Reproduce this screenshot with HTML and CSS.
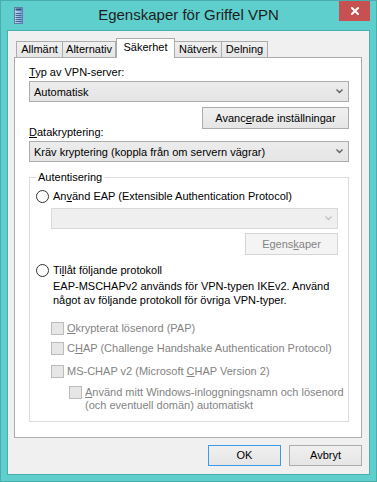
FILE: index.html
```html
<!DOCTYPE html>
<html lang="sv">
<head>
    <meta charset="UTF-8">
    <title>Egenskaper för Griffel VPN</title>
    <link rel="stylesheet" href="styles.css">
</head>
<body>
    <div class="window">
        <div class="titlebar">
            <svg class="app-icon" width="9" height="17" viewBox="0 0 9 17">
                <defs>
                    <linearGradient id="tower" x1="0" y1="0" x2="1" y2="0">
                        <stop offset="0" stop-color="#c9def2"/>
                        <stop offset="1" stop-color="#6f9bcb"/>
                    </linearGradient>
                </defs>
                <rect x="0.5" y="0.5" width="8" height="16" fill="url(#tower)" stroke="#5d7fa6"/>
                <rect x="1.5" y="1.5" width="6" height="2" fill="#2c4f80"/>
                <rect x="1.5" y="6" width="6" height="1" fill="#3f6495"/>
                <rect x="1.5" y="8" width="6" height="1" fill="#3f6495"/>
                <rect x="1.5" y="10" width="6" height="1" fill="#3f6495"/>
                <rect x="1.5" y="12" width="6" height="1" fill="#3f6495"/>
                <rect x="1.5" y="14" width="6" height="1" fill="#3f6495"/>
            </svg>
            <div class="title">Egenskaper för Griffel VPN</div>
            <div class="close">
                <svg width="8" height="8" viewBox="0 0 8 8">
                    <path d="M1 1 L7 7 M7 1 L1 7" stroke="#fff" stroke-width="2" stroke-linecap="square"/>
                </svg>
            </div>
        </div>

        <div class="client">
            <div class="tabs">
                <div class="tab tab-general">Allmänt</div>
                <div class="tab tab-options">Alternativ</div>
                <div class="tab tab-security active">Säkerhet</div>
                <div class="tab tab-network">Nätverk</div>
                <div class="tab tab-sharing">Delning</div>
            </div>

            <div class="panel">
                <div class="field-label"><u>T</u>yp av VPN-server:</div>
                <div class="combo">
                    <span>Automatisk</span>
                    <svg class="chevron" width="7" height="5" viewBox="0 0 7 5"><path d="M0.5 0.5 L3.5 3.5 L6.5 0.5" fill="none" stroke="#606060" stroke-width="1.4"/></svg>
                </div>
                <div class="button-row">
                    <div class="button advanced">Avanc<u>e</u>rade inställningar</div>
                </div>
                <div class="field-label overlap"><u>D</u>atakryptering:</div>
                <div class="combo">
                    <span>Kräv kryptering (koppla från om servern vägrar)</span>
                    <svg class="chevron" width="7" height="5" viewBox="0 0 7 5"><path d="M0.5 0.5 L3.5 3.5 L6.5 0.5" fill="none" stroke="#606060" stroke-width="1.4"/></svg>
                </div>

                <fieldset class="group">
                    <legend>Autentisering</legend>

                    <div class="option">
                        <span class="radio"></span>
                        <span>An<u>v</u>änd EAP (Extensible Authentication Protocol)</span>
                    </div>
                    <div class="combo disabled eap-combo">
                        <span></span>
                        <svg class="chevron" width="7" height="5" viewBox="0 0 7 5"><path d="M0.5 0.5 L3.5 3.5 L6.5 0.5" fill="none" stroke="#c2c2c2" stroke-width="1.4"/></svg>
                    </div>
                    <div class="button-row inner">
                        <div class="button disabled props">Egens<u>k</u>aper</div>
                    </div>

                    <div class="option second">
                        <span class="radio"></span>
                        <span>Ti<u>l</u>låt följande protokoll</span>
                    </div>
                    <p class="note">EAP-MSCHAPv2 används för VPN-typen IKEv2. Använd<br>något av följande protokoll för övriga VPN-typer.</p>

                    <div class="check first">
                        <span class="box"></span>
                        <span><u>O</u>krypterat lösenord (PAP)</span>
                    </div>
                    <div class="check">
                        <span class="box"></span>
                        <span>C<u>H</u>AP (Challenge Handshake Authentication Protocol)</span>
                    </div>
                    <div class="check third">
                        <span class="box"></span>
                        <span>MS-CHAP v2 (Microsoft <u>C</u>HAP Version 2)</span>
                    </div>
                    <div class="check nested">
                        <span class="box"></span>
                        <span><u>A</u>nvänd mitt Windows-inloggningsnamn och lösenord<br>(och eventuell domän) automatiskt</span>
                    </div>
                </fieldset>
            </div>

            <div class="dialog-buttons">
                <div class="button default">OK</div>
                <div class="button">Avbryt</div>
            </div>
        </div>
    </div>
</body>
</html>
```

FILE: styles.css
```css
body {
    margin: 0;
    font-family: "Liberation Sans", Arial, sans-serif;
    font-size: 11px;
    color: #000;
}
u {
    text-decoration-thickness: 1px;
    text-underline-offset: 1px;
}
.window {
    width: 377px;
    height: 482px;
    box-sizing: border-box;
    border: 1px solid #47aeac;
    background-color: #5fcfcd;
    padding: 0 6px 6px;
    display: flex;
    flex-direction: column;
}
.titlebar {
    height: 29px;
    display: grid;
    grid-template-columns: 1fr auto 1fr;
    align-items: start;
}
.app-icon {
    margin: 6px 0 0 7px;
}
.title {
    margin-top: 4px;
    line-height: 20px;
    font-size: 15px;
    color: #1e1e1e;
    white-space: nowrap;
}
.close {
    justify-self: end;
    width: 31px;
    height: 20px;
    background-color: #c75050;
    display: flex;
    align-items: center;
    justify-content: center;
}
.client {
    flex: 1;
    border: 1px solid #47aeac;
    background-color: #f0f0f0;
    padding-top: 7px;
    display: flex;
    flex-direction: column;
}

/* tabs */
.tabs {
    display: flex;
    align-items: flex-end;
    margin-left: 8px;
    margin-bottom: -1px;
    position: relative;
    z-index: 1;
}
.tab {
    box-sizing: border-box;
    height: 17px;
    line-height: 15px;
    text-align: center;
    border: 1px solid #acacac;
    background: linear-gradient(#f0f0f0, #e5e5e5);
    margin-left: -1px;
    white-space: nowrap;
}
.tab:first-child {
    margin-left: 0;
}
.tab.active {
    height: 20px;
    line-height: 17px;
    background: #fff;
    border-bottom: none;
    margin-left: 0;
}
.tab-general { width: 47px; }
.tab-options { width: 54px; }
.tab-security { width: 59px; }
.tab-network { width: 48px; }
.tab-sharing { width: 47px; }

.panel {
    height: 381px;
    box-sizing: border-box;
    margin: 0 7px 0 6px;
    border: 1px solid #acacac;
    background-color: #fff;
    padding: 0 12px 0 14px;
}
.field-label {
    margin-top: 7px;
    line-height: 15px;
}
.field-label.overlap {
    margin-top: -4px;
}
.combo {
    box-sizing: border-box;
    height: 21px;
    margin-top: 1px;
    border: 1px solid #acacac;
    background: linear-gradient(#ececec, #e5e5e5);
    display: flex;
    align-items: center;
    justify-content: space-between;
    padding: 0 5px 0 4px;
    white-space: nowrap;
}
.chevron {
    margin-top: -1px;
}
.combo.disabled {
    background: #efefef;
    border-color: #d9d9d9;
}
.button-row {
    display: flex;
    justify-content: flex-end;
    margin-top: 5px;
}
.button {
    box-sizing: border-box;
    height: 22px;
    line-height: 20px;
    border: 1px solid #acacac;
    background: linear-gradient(#f0f0f0, #e5e5e5);
    text-align: center;
    white-space: nowrap;
}
.button.advanced {
    width: 147px;
}
.button.disabled {
    width: 93px;
    color: #838383;
    background: #f4f4f4;
    border-color: #d5d5d5;
}

/* authentication group */
.group {
    min-width: 0;
    margin: 8px 0 0;
    padding: 0 10px 0 0;
    height: 252px;
    box-sizing: border-box;
    border: 1px solid #dcdcdc;
}
.group legend {
    margin-left: 6px;
    padding: 0 2px;
    line-height: 15px;
}
.option {
    display: flex;
    align-items: center;
    line-height: 15px;
    margin: 4px 0 0 6px;
    gap: 4px;
    white-space: nowrap;
}
.option.second {
    margin-top: 8px;
}
.radio {
    width: 13px;
    height: 13px;
    box-sizing: border-box;
    border: 1px solid #333;
    border-radius: 50%;
    background-color: #fff;
    flex-shrink: 0;
}
.eap-combo {
    margin: 4px 0 0 21px;
}
.button-row.inner {
    margin-top: 4px;
}
.note {
    margin: 1px 0 0 23px;
    line-height: 14px;
    white-space: nowrap;
}
.check {
    display: flex;
    align-items: center;
    gap: 3px;
    margin: 5px 0 0 21px;
    line-height: 15px;
    color: #838383;
    white-space: nowrap;
}
.check.first {
    margin-top: 14px;
}
.check.third {
    margin-top: 8px;
}
.check.nested {
    align-items: flex-start;
    margin: 7px 0 0 39px;
    line-height: 13px;
}
.box {
    width: 13px;
    height: 13px;
    box-sizing: border-box;
    border: 1px solid #bcbcbc;
    background-color: #e6e6e6;
    flex-shrink: 0;
}

.dialog-buttons {
    display: flex;
    justify-content: flex-end;
    gap: 8px;
    margin: 7px 7px 0 0;
}
.dialog-buttons .button {
    width: 73px;
    height: 21px;
    line-height: 19px;
}
.button.default {
    border-color: #3c9ae6;
}
```
